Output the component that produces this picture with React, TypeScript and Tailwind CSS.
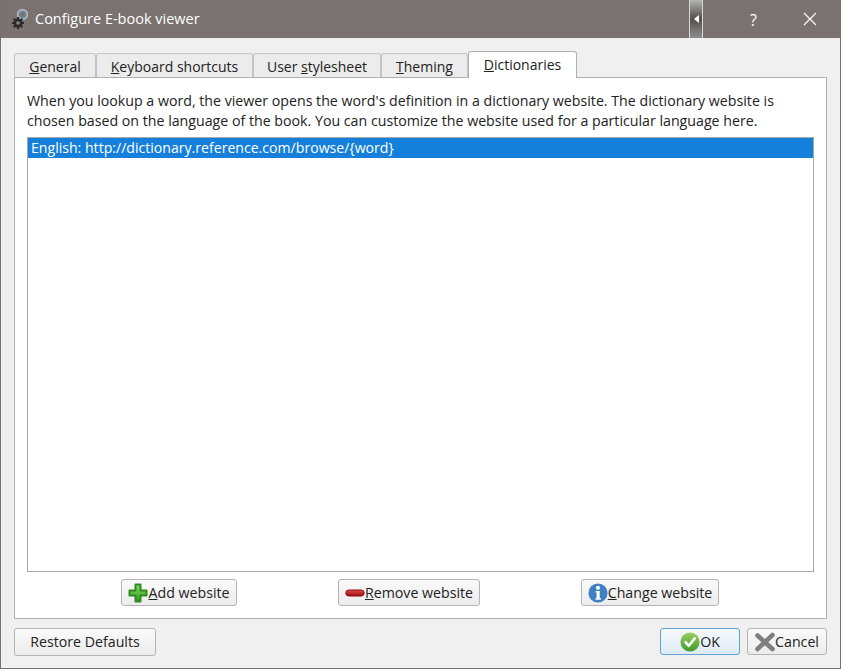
import type { ReactNode } from "react";

const font = { fontFamily: '"Open Sans", "Noto Sans", sans-serif' };

function GearIcon() {
  return (
    <svg width="20" height="22" viewBox="0 0 20 22" className="shrink-0">
      <circle cx="12.5" cy="6.5" r="5" fill="#7d8b98" stroke="#aebdcb" strokeWidth="1.4" />
      <circle cx="12.5" cy="6.5" r="2.4" fill="#77706e" />
      <g fill="#2b2b2b">
        <circle cx="8" cy="15" r="4.6" />
        <rect x="7" y="9" width="2" height="12" />
        <rect x="2" y="14" width="12" height="2" />
        <rect x="7" y="9" width="2" height="12" transform="rotate(45 8 15)" />
        <rect x="7" y="9" width="2" height="12" transform="rotate(-45 8 15)" />
      </g>
      <circle cx="8" cy="15" r="1.8" fill="#8a8a8a" />
    </svg>
  );
}

function PlusIcon() {
  return (
    <svg width="20" height="20" viewBox="0 0 20 20" className="shrink-0">
      <defs>
        <linearGradient id="plusFill" x1="0" y1="0" x2="0" y2="1">
          <stop offset="0" stopColor="#8fdc5a" />
          <stop offset="1" stopColor="#2e9a1e" />
        </linearGradient>
      </defs>
      <path
        d="M7.5 1.5h5v6h6v5h-6v6h-5v-6h-6v-5h6z"
        fill="url(#plusFill)"
        stroke="#2f8a20"
        strokeLinejoin="round"
        strokeWidth="2"
      />
    </svg>
  );
}

function MinusIcon() {
  return (
    <svg width="20" height="20" viewBox="0 0 20 20" className="shrink-0">
      <defs>
        <linearGradient id="minusFill" x1="0" y1="0" x2="0" y2="1">
          <stop offset="0" stopColor="#dc4f50" />
          <stop offset="1" stopColor="#9e0a0e" />
        </linearGradient>
      </defs>
      <rect x="0.8" y="7" width="18.4" height="6" rx="3" fill="url(#minusFill)" stroke="#8f0c10" />
    </svg>
  );
}

function InfoIcon() {
  return (
    <svg width="20" height="20" viewBox="0 0 20 20" className="shrink-0">
      <circle cx="10" cy="10" r="9.6" fill="#3f7fc4" />
      <circle cx="10" cy="4.8" r="2.1" fill="#fff" />
      <path d="M7.7 8h4v7.2h1.2v1.6H7.4v-1.6h1.2V9.6H7.7z" fill="#fff" />
    </svg>
  );
}

function CheckIcon() {
  return (
    <svg width="20" height="20" viewBox="0 0 20 20" className="shrink-0">
      <defs>
        <linearGradient id="okFill" x1="0" y1="0" x2="0" y2="1">
          <stop offset="0" stopColor="#9ccf62" />
          <stop offset="1" stopColor="#3f9a2a" />
        </linearGradient>
      </defs>
      <circle cx="10" cy="10" r="9.6" fill="url(#okFill)" />
      <path d="M5.5 10.2l3.2 3.6 6-7.4" fill="none" stroke="#fff" strokeWidth="2.6" strokeLinecap="round" strokeLinejoin="round" />
    </svg>
  );
}

function CrossIcon() {
  return (
    <svg width="20" height="20" viewBox="0 0 20 20" className="shrink-0">
      <path d="M2.5 3.5L17.5 17M17.5 3L2.5 17" fill="none" stroke="#7f7f7f" strokeWidth="4.6" strokeLinecap="round" />
    </svg>
  );
}

function Btn({ className, icon, children }: { className: string; icon?: ReactNode; children: ReactNode }) {
  return (
    <button
      className={`flex items-center justify-center rounded-[3px] border border-[#b4b4b4] bg-gradient-to-b from-[#fafafa] to-[#ececec] text-[14.2px] text-[#222] ${className}`}
    >
      {icon}
      <span>{children}</span>
    </button>
  );
}

function Tab({ children, active, className }: { children: ReactNode; active?: boolean; className: string }) {
  if (active) {
    return (
      <div className={`relative z-10 -mb-px flex h-[27px] items-center justify-center rounded-t-[3px] border border-b-0 border-[#b0b0b0] bg-white pb-[2px] text-[14px] text-[#222] ${className}`}>
        {children}
      </div>
    );
  }
  return (
    <div className={`flex h-[24px] items-center justify-center rounded-t-[3px] border border-b-0 border-[#c4c4c4] bg-[#ececec] pt-[2px] text-[14px] text-[#222] ${className}`}>
      {children}
    </div>
  );
}

export default function App() {
  return (
    <div style={font} className="flex h-[669px] w-[841px] flex-col overflow-hidden border-x border-b border-[#77706e] bg-[#f0f0f0]">
      {/* title bar */}
      <div className="-mx-px flex h-[38px] shrink-0 items-center bg-[#7a7270] pl-[10px]">
        <GearIcon />
        <span className="ml-[5px] text-[14.5px] text-white">Configure E-book viewer</span>
        <div className="ml-auto mr-[138px] flex h-[38px] w-[14px] items-center justify-center border-x border-[#d8d8d8] bg-gradient-to-b from-[#b5b5b5] via-[#55504f] to-[#8f8f8f]">
          <div className="h-0 w-0 border-y-[4px] border-r-[5px] border-y-transparent border-r-white" />
        </div>
        <span className="absolute left-[750px] top-[8px] text-[16px] text-white">?</span>
        <svg width="14" height="14" viewBox="0 0 14 14" className="absolute left-[803px] top-[12px]">
          <path d="M1 1l12 12M13 1L1 13" stroke="#fff" strokeWidth="1.1" fill="none" />
        </svg>
      </div>

      <div className="flex flex-1 flex-col px-[13px]">
        {/* tabs */}
        <div className="mt-[13px] flex h-[26px] items-end">
          <Tab className="w-[82px]"><span><u>G</u>eneral</span></Tab>
          <Tab className="w-[157px]"><span><u>K</u>eyboard shortcuts</span></Tab>
          <Tab className="w-[128px]"><span>User <u>s</u>tylesheet</span></Tab>
          <Tab className="w-[87px]"><span><u>T</u>heming</span></Tab>
          <Tab active className="w-[109px]"><span><u>D</u>ictionaries</span></Tab>
        </div>

        {/* panel */}
        <div className="flex h-[542px] flex-col border border-[#b0b0b0] bg-white px-[12px]">
          <p className="mt-[13px] text-[14.2px] leading-[20px] text-[#222]">
            When you lookup a word, the viewer opens the word's definition in a dictionary website. The dictionary website is chosen based on the language of the book. You can customize the website used for a particular language here.
          </p>
          <div className="mt-[6px] h-[435px] border border-[#a8a8a8] bg-white">
            <div className="flex h-[20px] items-center bg-[#1580dc] pl-[3px] text-[14.1px] text-white">
              English: http://dictionary.reference.com/browse/{"{word}"}
            </div>
          </div>
          <div className="relative mt-[7px] h-[27px]">
            <Btn icon={<PlusIcon />} className="absolute left-[94px] top-0 h-[27px] w-[116px]"><u>A</u>dd website</Btn>
            <Btn icon={<MinusIcon />} className="absolute left-[311px] top-0 h-[27px] w-[142px]"><u>R</u>emove website</Btn>
            <Btn icon={<InfoIcon />} className="absolute left-[554px] top-0 h-[27px] w-[138px]"><u>C</u>hange website</Btn>
          </div>
        </div>

        {/* footer buttons */}
        <div className="mt-[9px] flex items-start">
          <Btn className="h-[28px] w-[142px]">Restore Defaults</Btn>
          <Btn icon={<CheckIcon />} className="ml-auto h-[27px] w-[80px] !border-[#5fa3d6] !from-[#f4fafe] !to-[#dfeaf3]">OK</Btn>
          <Btn icon={<CrossIcon />} className="ml-[7px] h-[27px] w-[80px]">Cancel</Btn>
        </div>
      </div>
    </div>
  );
}
